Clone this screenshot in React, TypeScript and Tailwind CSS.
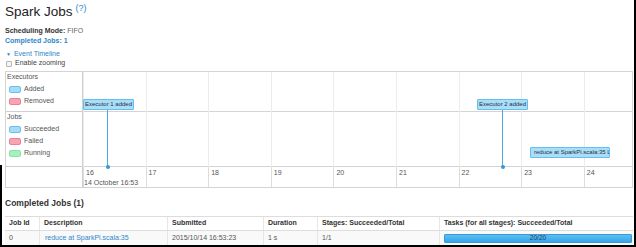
import React from 'react';

// Timeline geometry (relative to the graph area)
const TICK_SPACING = 62.6;
const TICKS = ['16', '17', '18', '19', '20', '21', '22', '23', '24'];

interface LegendItem {
  label: string;
  swatch: string;
}

const EXECUTOR_LEGEND: LegendItem[] = [
  { label: 'Added', swatch: 'bg-[#a6dcf8] border-[#6cc0f0]' },
  { label: 'Removed', swatch: 'bg-[#f7a4b4] border-[#ef7f95]' },
];

const JOB_LEGEND: LegendItem[] = [
  { label: 'Succeeded', swatch: 'bg-[#a6dcf8] border-[#6cc0f0]' },
  { label: 'Failed', swatch: 'bg-[#f7a4b4] border-[#ef7f95]' },
  { label: 'Running', swatch: 'bg-[#a5f0bd] border-[#86e4a4]' },
];

const EXECUTOR_EVENTS = [
  { label: 'Executor 1 added', left: 0, line: 24 },
  { label: 'Executor 2 added', left: 394, line: 419 },
];

function LegendRow({ item }: { item: LegendItem }) {
  return (
    <div className="flex items-center h-[12px] pl-[3px] gap-[3px]">
      <span className={`w-[12px] h-[7px] rounded-[2px] border ${item.swatch}`} />
      <span>{item.label}</span>
    </div>
  );
}

function EventTimeline() {
  return (
    <div className="mt-[3px] flex border border-[#d4d4d4] text-[7px] text-[#555] h-[117px]">
      {/* Legend column */}
      <div className="w-[77px] flex-none flex flex-col border-r border-[#cfcfcf]">
        <div className="h-[40px] border-b border-[#cfcfcf]">
          <div className="h-[11px] flex items-center pl-[1px]">Executors</div>
          {EXECUTOR_LEGEND.map((item) => (
            <LegendRow key={item.label} item={item} />
          ))}
        </div>
        <div className="h-[55px] border-b border-[#cfcfcf]">
          <div className="h-[11px] flex items-center pl-[1px]">Jobs</div>
          {JOB_LEGEND.map((item) => (
            <LegendRow key={item.label} item={item} />
          ))}
        </div>
        <div className="flex-1" />
      </div>

      {/* Graph area */}
      <div className="relative flex-1 flex flex-col overflow-hidden">
        {/* vertical grid lines */}
        {TICKS.map((t, i) => (
          <div
            key={t}
            className="absolute top-0 bottom-0 w-px bg-[#ececec]"
            style={{ left: `${i * TICK_SPACING}px` }}
          />
        ))}
        <div className="h-[40px] border-b border-[#d4d4d4] flex-none" />
        <div className="h-[55px] border-b border-[#d4d4d4] flex-none" />
        <div className="relative flex-1">
          {TICKS.map((t, i) => (
            <div
              key={t}
              className="absolute top-0 bottom-0 w-px bg-[#dcdcdc]"
              style={{ left: `${i * TICK_SPACING}px` }}
            />
          ))}
          {TICKS.map((t, i) => (
            <span
              key={t}
              className="absolute top-[1px] leading-[9px]"
              style={{ left: `${i * TICK_SPACING + 3}px` }}
            >
              {t}
            </span>
          ))}
          <span className="absolute left-[1px] top-[11px] leading-[9px]">14 October 16:53</span>
        </div>

        {/* executor events */}
        {EXECUTOR_EVENTS.map((ev) => (
          <React.Fragment key={ev.label}>
            <div
              className="absolute top-[27px] w-[51px] h-[11px] bg-[#a9ddf8] border border-[#66bdf0] rounded-[1px] text-[6px] leading-[9px] text-[#234] flex items-center justify-center whitespace-nowrap"
              style={{ left: `${ev.left}px` }}
            >
              {ev.label}
            </div>
            <div
              className="absolute top-[38px] h-[57px] w-px bg-[#4aa8e6]"
              style={{ left: `${ev.line}px` }}
            />
            <div
              className="absolute top-[93px] w-[4px] h-[4px] rounded-full bg-[#3a96d8]"
              style={{ left: `${ev.line - 1.5}px` }}
            />
          </React.Fragment>
        ))}

        {/* job event */}
        <div className="absolute left-[447px] top-[75px] w-[80px] h-[11px] bg-[#a9ddf8] border border-[#66bdf0] rounded-[1px] text-[6px] leading-[9px] text-[#234] pl-[3px] overflow-hidden whitespace-nowrap flex items-center">
          reduce at SparkPi.scala:35 L
        </div>
      </div>
    </div>
  );
}

function CompletedJobsTable() {
  const headers = [
    { label: 'Job Id', w: 'w-[34px]' },
    { label: 'Description', w: 'w-[128px]' },
    { label: 'Submitted', w: 'w-[96px]' },
    { label: 'Duration', w: 'w-[54px]' },
    { label: 'Stages: Succeeded/Total', w: 'w-[122px]' },
    { label: 'Tasks (for all stages): Succeeded/Total', w: 'flex-1' },
  ];

  return (
    <div className="mt-[8px] border-t border-[#dddddd] text-[7px]">
      <div className="flex h-[14px] border-b border-[#dddddd] font-bold text-[#333]">
        {headers.map((h, i) => (
          <div
            key={h.label}
            className={`${h.w} flex items-center pl-[4px] whitespace-nowrap ${i > 0 ? 'border-l border-[#e6e6e6]' : ''}`}
          >
            {h.label}
          </div>
        ))}
      </div>
      <div className="flex h-[14px] bg-[#f9f9f9] text-[#555]">
        <div className="w-[34px] flex items-center pl-[4px]">0</div>
        <div className="w-[128px] flex items-center pl-[5px] border-l border-[#e6e6e6] text-[#2f86cc]">
          reduce at SparkPi.scala:35
        </div>
        <div className="w-[96px] flex items-center pl-[4px] border-l border-[#e6e6e6]">2015/10/14 16:53:23</div>
        <div className="w-[54px] flex items-center pl-[4px] border-l border-[#e6e6e6]">1 s</div>
        <div className="w-[122px] flex items-center pl-[4px] border-l border-[#e6e6e6]">1/1</div>
        <div className="flex-1 flex items-center pl-[4px] pr-[1px] border-l border-[#e6e6e6]">
          <div className="w-full h-[9px] rounded-[1px] bg-gradient-to-b from-[#55c0f4] to-[#3aa4e6] border border-[#3a9ad9] flex items-center justify-center text-[6.5px] text-[#1d3f5c]">
            20/20
          </div>
        </div>
      </div>
    </div>
  );
}

export default function App() {
  return (
    <div
      className="relative w-[636px] h-[247px] overflow-hidden bg-white border-r-2 border-b-2 border-black text-[#333]"
      style={{ fontFamily: '"Liberation Sans", Arial, sans-serif' }}
    >
      {/* left frame edge at the bottom of the capture */}
      <div className="absolute left-0 top-[165px] bottom-0 w-[2px] bg-black" />

      <div className="pl-[5px] pr-[1px]">
        <div className="pt-[4px] h-[19px] flex items-start">
          <span className="text-[13.5px] leading-[15px] text-[#222]">Spark Jobs</span>
          <span className="ml-[3px] mt-[-1px] text-[9px] leading-[10px] text-[#2f86cc]">(?)</span>
        </div>

        <div className="mt-[7px] text-[7px] leading-[10px]">
          <b className="text-[#333]">Scheduling Mode:</b> <span className="text-[#666]">FIFO</span>
        </div>
        <div className="text-[7px] leading-[10px] font-bold text-[#2f86cc]">
          Completed Jobs: <span>1</span>
        </div>

        <div className="mt-[4px] h-[9px] flex items-center gap-[3px] text-[7px] text-[#2f86cc]">
          <span className="text-[5px] ml-[1px]">▼</span>
          <span>Event Timeline</span>
        </div>
        <div className="h-[9px] flex items-center gap-[3px] text-[7px] text-[#444]">
          <span className="ml-[1px] w-[6px] h-[6px] border border-[#b5b5b5] bg-[#f4f4f4] rounded-[1px]" />
          <span>Enable zooming</span>
        </div>

        <EventTimeline />

        <div className="mt-[10px] h-[10px] flex items-center text-[8.5px] font-bold text-[#333]">
          Completed Jobs (1)
        </div>

        <CompletedJobsTable />
      </div>
    </div>
  );
}
